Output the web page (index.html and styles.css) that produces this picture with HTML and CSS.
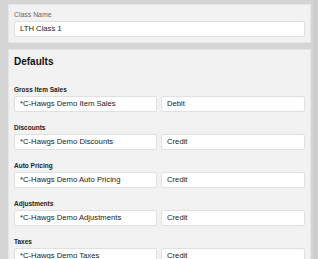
FILE: index.html
```html
<!DOCTYPE html>
<html lang="en">
<head>
  <meta charset="UTF-8" />
  <meta name="viewport" content="width=device-width, initial-scale=1.0" />
  <title>Class Settings</title>
  <link rel="stylesheet" href="styles.css">
</head>
<body>
  <div class="page">
    <div class="card">
      <label class="field-label">Class Name</label>
      <div class="input">LTH Class 1</div>
    </div>

    <div class="card defaults">
      <h2>Defaults</h2>

      <div class="row">
        <h4>Gross Item Sales</h4>
        <div class="pair">
          <div class="input">*C-Hawgs Demo Item Sales</div>
          <div class="input">Debit</div>
        </div>
      </div>

      <div class="row">
        <h4>Discounts</h4>
        <div class="pair">
          <div class="input">*C-Hawgs Demo Discounts</div>
          <div class="input">Credit</div>
        </div>
      </div>

      <div class="row">
        <h4>Auto Pricing</h4>
        <div class="pair">
          <div class="input">*C-Hawgs Demo Auto Pricing</div>
          <div class="input">Credit</div>
        </div>
      </div>

      <div class="row">
        <h4>Adjustments</h4>
        <div class="pair">
          <div class="input">*C-Hawgs Demo Adjustments</div>
          <div class="input">Credit</div>
        </div>
      </div>

      <div class="row">
        <h4>Taxes</h4>
        <div class="pair">
          <div class="input">*C-Hawgs Demo Taxes</div>
          <div class="input">Credit</div>
        </div>
      </div>
    </div>
  </div>
</body>
</html>
```

FILE: styles.css
```css
html, body {
  height: 100%;
}

body {
  font-family: 'Liberation Sans', Arial, sans-serif;
  margin: 0;
  background-color: #d5d5d5;
  color: #1a1a1a;
  overflow: hidden;
  border-right: 5px solid #cdcdcd;
  box-sizing: border-box;
}

.page {
  padding: 4px 2px 0 8px;
}

.card {
  background-color: #f2f2f2;
  border: 1px solid #e6e6e6;
  padding: 5px 5px 5px 5px;
  margin-bottom: 6px;
}

.field-label {
  display: block;
  font-size: 6.9px;
  color: #666;
  line-height: 9px;
  margin-bottom: 2px;
}

.input {
  background-color: #fff;
  border: 1px solid #e0e0e0;
  border-radius: 2px;
  height: 14px;
  line-height: 14px;
  padding: 0 5px;
  font-size: 7.7px;
  color: #222;
  white-space: nowrap;
  overflow: hidden;
}

.defaults h2 {
  font-size: 10px;
  font-weight: bold;
  margin: 0;
  line-height: 14px;
  color: #111;
}

.row {
  margin-top: 17px;
}

.row + .row {
  margin-top: 12px;
}

.row h4 {
  font-size: 6.5px;
  font-weight: bold;
  margin: 0 0 2px 0;
  line-height: 8px;
  color: #222;
}

.pair {
  display: grid;
  grid-template-columns: 143px 1fr;
  gap: 4px;
}
```
